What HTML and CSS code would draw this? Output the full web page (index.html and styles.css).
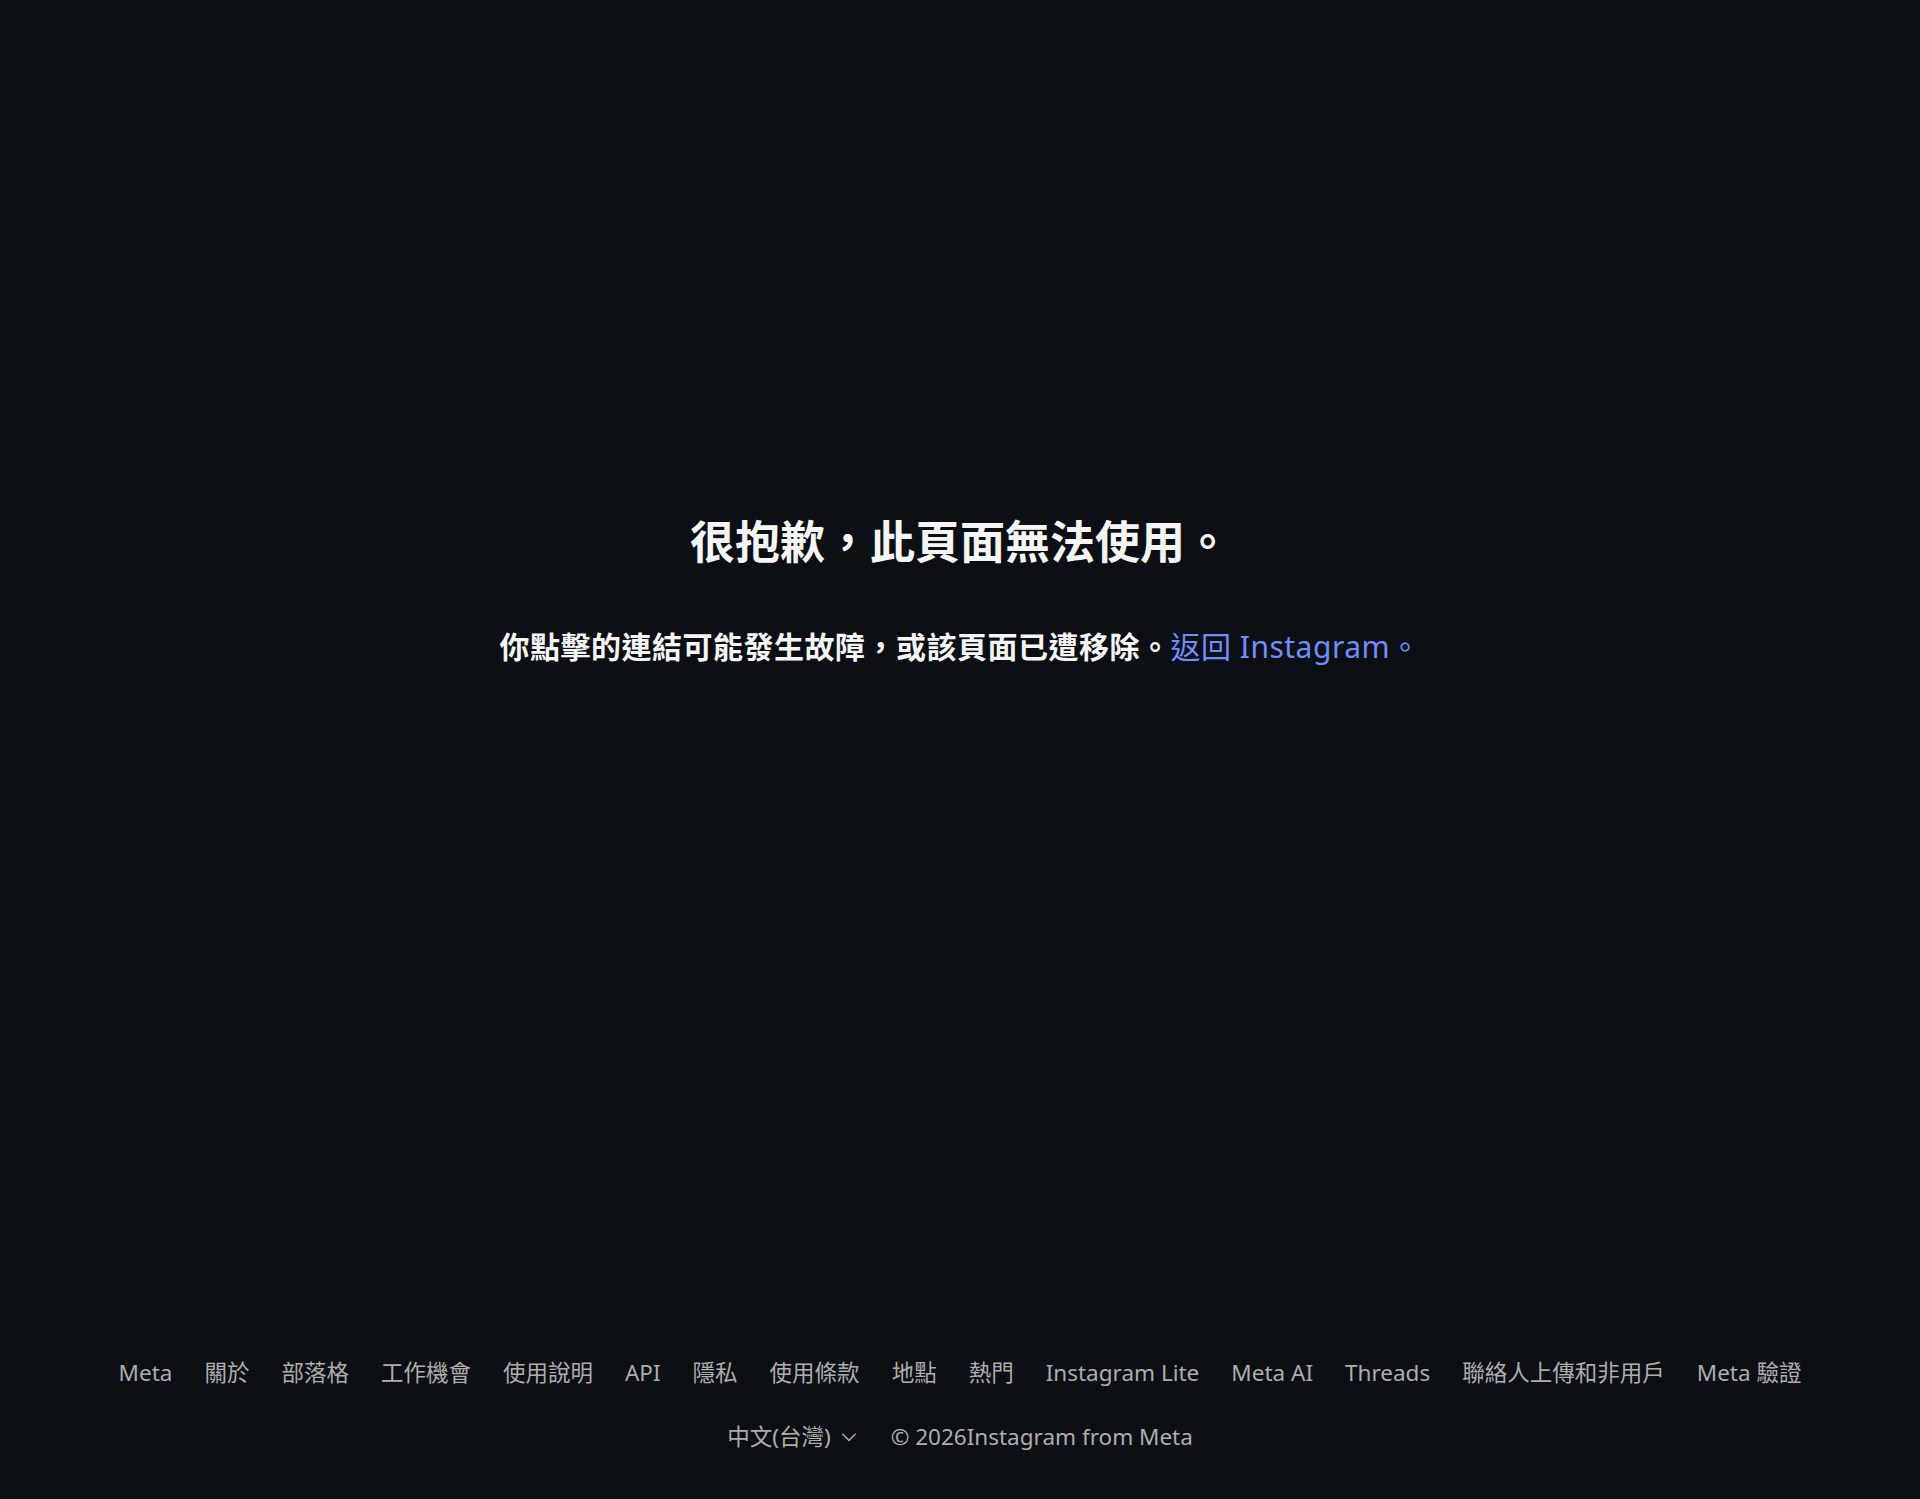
FILE: index.html
```html
<!DOCTYPE html>
<html lang="zh-Hant">
<head>
  <meta charset="UTF-8" />
  <meta name="viewport" content="width=device-width, initial-scale=1.0" />
  <title>Instagram</title>
  <link rel="stylesheet" href="styles.css">
</head>
<body>
  <main class="error-page">
    <h2 class="error-title">很抱歉，此頁面無法使用。</h2>
    <p class="error-text">你點擊的連結可能發生故障，或該頁面已遭移除。<a href="#" class="back-link">返回 Instagram。</a></p>
  </main>

  <footer class="site-footer">
    <nav class="footer-links">
      <a href="#">Meta</a>
      <a href="#">關於</a>
      <a href="#">部落格</a>
      <a href="#">工作機會</a>
      <a href="#">使用說明</a>
      <a href="#">API</a>
      <a href="#">隱私</a>
      <a href="#">使用條款</a>
      <a href="#">地點</a>
      <a href="#">熱門</a>
      <a href="#">Instagram Lite</a>
      <a href="#">Meta AI</a>
      <a href="#">Threads</a>
      <a href="#">聯絡人上傳和非用戶</a>
      <a href="#">Meta 驗證</a>
    </nav>
    <div class="footer-bottom">
      <span class="lang-select">中文(台灣)
        <svg class="chevron" width="20" height="20" viewBox="0 0 24 24" aria-hidden="true">
          <polyline points="4,8 12,16 20,8" fill="none" stroke="currentColor" stroke-width="1.8" />
        </svg>
      </span>
      <span class="copyright">© 2026Instagram from Meta</span>
    </div>
  </footer>
</body>
</html>
```

FILE: styles.css
```css
body {
  font-family: 'Noto Sans', 'Noto Sans CJK TC', sans-serif;
  margin: 0;
  padding: 0;
  background: #0c1014;
  color: #f5f5f5;
  min-height: 100vh;
  display: flex;
  flex-direction: column;
}

a {
  text-decoration: none;
  color: inherit;
}

.error-page {
  flex: 1;
  padding-top: 515px;
  text-align: center;
}

.error-title {
  margin: 0;
  font-size: 45px;
  line-height: 54px;
  font-weight: 700;
}

.error-text {
  margin: 60px 0 0;
  font-size: 30px;
  line-height: 36px;
  font-weight: 600;
  letter-spacing: 0.5px;
}

.back-link {
  color: #708dff;
  font-weight: 400;
}

.site-footer {
  padding-bottom: 47px;
  color: #adadad;
  font-size: 22.5px;
  line-height: 30px;
}

.footer-links {
  display: flex;
  justify-content: center;
  flex-wrap: wrap;
}

.footer-links a {
  margin: 0 16px;
}

.footer-bottom {
  display: flex;
  justify-content: center;
  align-items: center;
  gap: 32px;
  margin-top: 34px;
}

.lang-select {
  display: flex;
  align-items: center;
  gap: 8px;
}

.chevron {
  color: #a8a8a8;
}
```
